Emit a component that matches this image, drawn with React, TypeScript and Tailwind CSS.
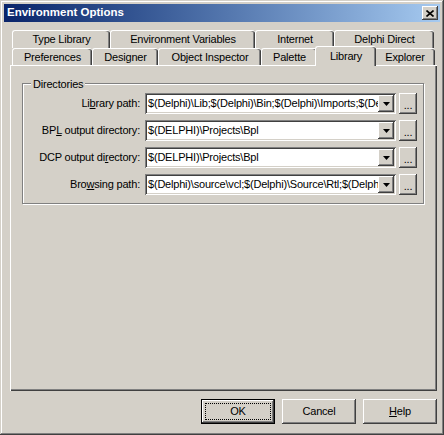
import type { ReactNode } from "react";

const raised =
  "shadow-[inset_-1px_-1px_#404040,inset_1px_1px_#ffffff,inset_-2px_-2px_#808080,inset_2px_2px_#d4d0c8]";
const sunken =
  "shadow-[inset_1px_1px_#808080,inset_-1px_-1px_#ffffff,inset_2px_2px_#404040,inset_-2px_-2px_#d4d0c8]";

const topRow = [
  { label: "Type Library", w: "w-[98px]" },
  { label: "Environment Variables", w: "w-[145px]" },
  { label: "Internet", w: "w-[79px]" },
  { label: "Delphi Direct", w: "w-[100px]" },
];

const bottomRow = [
  { label: "Preferences", w: "w-[80px]" },
  { label: "Designer", w: "w-[66px]" },
  { label: "Object Inspector", w: "w-[103px]" },
  { label: "Palette", w: "w-[56px]" },
  { label: "Library", w: "w-[56px]", active: true },
  { label: "Explorer", w: "w-[61px]" },
];

const rows: { label: ReactNode; value: string }[] = [
  {
    label: (
      <>
        Li<u>b</u>rary path:
      </>
    ),
    value: "$(Delphi)\\Lib;$(Delphi)\\Bin;$(Delphi)\\Imports;$(Delphi)\\Projects\\Bpl",
  },
  {
    label: (
      <>
        BP<u>L</u> output directory:
      </>
    ),
    value: "$(DELPHI)\\Projects\\Bpl",
  },
  {
    label: (
      <>
        DCP output di<u>r</u>ectory:
      </>
    ),
    value: "$(DELPHI)\\Projects\\Bpl",
  },
  {
    label: (
      <>
        Bro<u>w</u>sing path:
      </>
    ),
    value: "$(Delphi)\\source\\vcl;$(Delphi)\\Source\\Rtl;$(Delphi)\\Source\\Internet",
  },
];

function Tab({ label, w, active }: { label: string; w: string; active?: boolean }) {
  if (active) {
    return (
      <div
        className={`${w} relative z-10 -mx-[2px] -mt-[2px] mb-[-1px] box-content flex items-start justify-center rounded-t-[3px] border-l border-t border-white bg-[#d4d0c8] px-[2px] pt-[1px] shadow-[inset_-1px_0_#404040,inset_-2px_0_#808080]`}
      >
        {label}
      </div>
    );
  }
  return (
    <div
      className={`${w} flex items-center justify-center rounded-t-[3px] border-l border-t border-white shadow-[inset_-1px_0_#404040,inset_-2px_0_#808080]`}
    >
      {label}
    </div>
  );
}

function Combo({ value }: { value: string }) {
  return (
    <div className={`flex h-[21px] w-[251px] items-center bg-white p-[2px] ${sunken}`}>
      <span className="flex-1 overflow-hidden whitespace-nowrap pl-[1px]">{value}</span>
      <div className={`flex h-[17px] w-[16px] shrink-0 items-center justify-center bg-[#d4d0c8] ${raised}`}>
        <svg width="7" height="4" viewBox="0 0 7 4">
          <path d="M0 0h7L3.5 4z" fill="#000" />
        </svg>
      </div>
    </div>
  );
}

function Button({ children, def }: { children: ReactNode; def?: boolean }) {
  if (def) {
    return (
      <div className="h-[25px] w-[74px] border border-black">
        <div className={`flex h-full w-full items-center justify-center p-[3px] ${raised}`}>
          <div className="flex h-full w-full items-center justify-center border border-dotted border-black">
            {children}
          </div>
        </div>
      </div>
    );
  }
  return (
    <div className={`flex h-[25px] w-[74px] items-center justify-center ${raised}`}>{children}</div>
  );
}

export default function App() {
  return (
    <div
      className={`flex h-[435px] w-[444px] flex-col bg-[#d4d0c8] px-[4px] pt-[4px] font-['Liberation_Sans',Arial,sans-serif] text-[11px] tracking-[-0.2px] text-black shadow-[inset_-1px_-1px_#404040,inset_1px_1px_#d4d0c8,inset_-2px_-2px_#808080,inset_2px_2px_#ffffff]`}
    >
      <div className="flex h-[18px] items-center bg-gradient-to-r from-[#0a246a] to-[#a6caf0] pl-[3px] pr-[2px]">
        <span className="text-[11.5px] font-bold tracking-normal text-white">Environment Options</span>
        <div className={`ml-auto flex h-[14px] w-[16px] items-center justify-center bg-[#d4d0c8] ${raised}`}>
          <svg width="8" height="7" viewBox="0 0 8 7">
            <path d="M0.5 0.5L7.5 6.5M7.5 0.5L0.5 6.5" stroke="#000" strokeWidth="1.6" />
          </svg>
        </div>
      </div>

      <div className="mt-[8px] flex h-[18px] pl-[8px]">
        {topRow.map((t) => (
          <Tab key={t.label} {...t} />
        ))}
      </div>
      <div className="flex h-[17px] pl-[8px]">
        {bottomRow.map((t) => (
          <Tab key={t.label} {...t} />
        ))}
      </div>

      <div className="ml-[6px] h-[326px] w-[427px] border-l border-t border-white pl-[11px] pt-[17px] shadow-[inset_-1px_-1px_#404040,inset_-2px_-2px_#808080]">
        <div className="relative h-[121px] w-[402px] border border-[#808080] shadow-[inset_1px_1px_#ffffff,1px_1px_#ffffff]">
          <span className="absolute -top-[8px] left-[8px] bg-[#d4d0c8] px-[2px]">Directories</span>
          <div className="flex flex-col gap-[6px] pt-[9px]">
            {rows.map((r, i) => (
              <div key={i} className="flex h-[21px] items-center">
                <div className="w-[122px] pr-[5px] text-right">{r.label}</div>
                <Combo value={r.value} />
                <div
                  className={`ml-[3px] flex h-[21px] w-[18px] items-end justify-center pb-[3px] leading-none ${raised}`}
                >
                  ...
                </div>
              </div>
            ))}
          </div>
        </div>
      </div>

      <div className="mt-[8px] flex justify-end gap-[7px] pr-[3px]">
        <Button def>OK</Button>
        <Button>Cancel</Button>
        <Button>
          <span>
            <u>H</u>elp
          </span>
        </Button>
      </div>
    </div>
  );
}
